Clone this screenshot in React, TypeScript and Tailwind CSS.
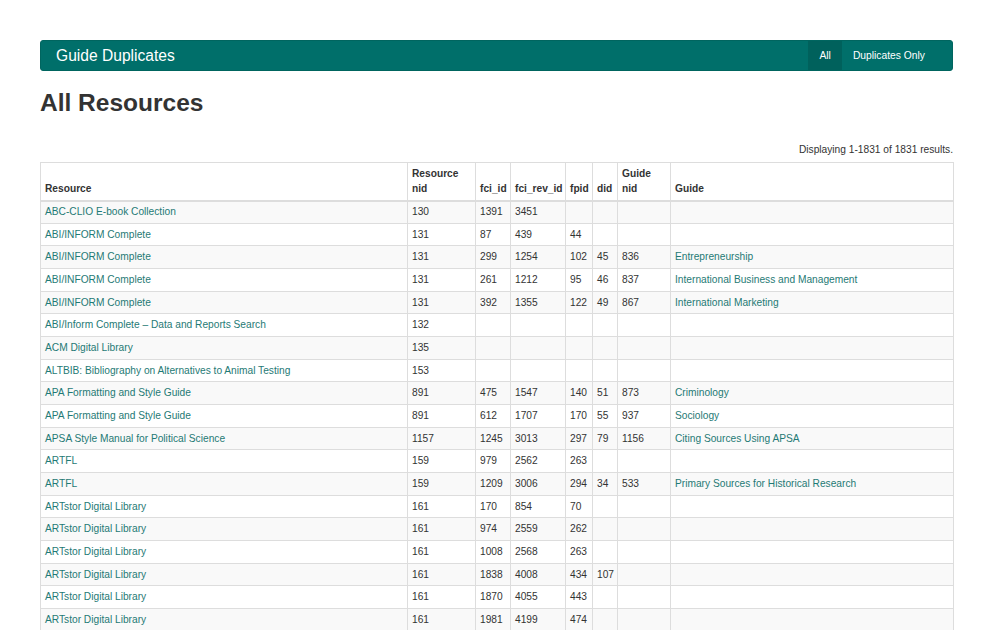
import React from "react";

type Row = {
  r: string;
  nid: string;
  fci?: string;
  rev?: string;
  fpid?: string;
  did?: string;
  gnid?: string;
  guide?: string;
};

const rows: Row[] = [
  { r: "ABC-CLIO E-book Collection", nid: "130", fci: "1391", rev: "3451" },
  { r: "ABI/INFORM Complete", nid: "131", fci: "87", rev: "439", fpid: "44" },
  { r: "ABI/INFORM Complete", nid: "131", fci: "299", rev: "1254", fpid: "102", did: "45", gnid: "836", guide: "Entrepreneurship" },
  { r: "ABI/INFORM Complete", nid: "131", fci: "261", rev: "1212", fpid: "95", did: "46", gnid: "837", guide: "International Business and Management" },
  { r: "ABI/INFORM Complete", nid: "131", fci: "392", rev: "1355", fpid: "122", did: "49", gnid: "867", guide: "International Marketing" },
  { r: "ABI/Inform Complete \u2013 Data and Reports Search", nid: "132" },
  { r: "ACM Digital Library", nid: "135" },
  { r: "ALTBIB: Bibliography on Alternatives to Animal Testing", nid: "153" },
  { r: "APA Formatting and Style Guide", nid: "891", fci: "475", rev: "1547", fpid: "140", did: "51", gnid: "873", guide: "Criminology" },
  { r: "APA Formatting and Style Guide", nid: "891", fci: "612", rev: "1707", fpid: "170", did: "55", gnid: "937", guide: "Sociology" },
  { r: "APSA Style Manual for Political Science", nid: "1157", fci: "1245", rev: "3013", fpid: "297", did: "79", gnid: "1156", guide: "Citing Sources Using APSA" },
  { r: "ARTFL", nid: "159", fci: "979", rev: "2562", fpid: "263" },
  { r: "ARTFL", nid: "159", fci: "1209", rev: "3006", fpid: "294", did: "34", gnid: "533", guide: "Primary Sources for Historical Research" },
  { r: "ARTstor Digital Library", nid: "161", fci: "170", rev: "854", fpid: "70" },
  { r: "ARTstor Digital Library", nid: "161", fci: "974", rev: "2559", fpid: "262" },
  { r: "ARTstor Digital Library", nid: "161", fci: "1008", rev: "2568", fpid: "263" },
  { r: "ARTstor Digital Library", nid: "161", fci: "1838", rev: "4008", fpid: "434", did: "107" },
  { r: "ARTstor Digital Library", nid: "161", fci: "1870", rev: "4055", fpid: "443" },
  { r: "ARTstor Digital Library", nid: "161", fci: "1981", rev: "4199", fpid: "474" },
  { r: "ARTstor Digital Library", nid: "161", fci: "2011", rev: "4240", fpid: "480" },
  { r: "ASTM Standards", nid: "165", fci: "2140", rev: "4410", fpid: "501" },
];

const td = "border border-[#dddddd] px-[4px] h-[22.67px] align-middle whitespace-nowrap overflow-hidden";
const th = "border border-[#dddddd] border-b-2 px-[4px] pb-[4px] align-bottom text-left font-bold leading-[15px]";

export default function App() {
  return (
    <div className="w-[1000px] min-h-[630px] bg-white text-[#333333] font-['Liberation_Sans',Arial,sans-serif] pt-[40px] pl-[40px]">
      <div className="w-[913px]">
        <nav className="h-[31px] bg-[#006f6a] rounded-[3px] border border-[#00655f] flex items-stretch justify-between text-white">
          <div className="pl-[15px] flex items-center text-[15.6px] leading-none">Guide Duplicates</div>
          <div className="flex items-stretch pr-[16px] text-[10.3px]">
            <div className="bg-[#00615c] px-[11px] flex items-center">All</div>
            <div className="px-[11px] flex items-center">Duplicates Only</div>
          </div>
        </nav>
        <h1 className="mt-[18px] text-[24.5px] leading-[28px] font-bold text-[#333333]">All Resources</h1>
        <div className="mt-[26px] text-right text-[10.2px] leading-[14px]">Displaying 1-1831 of 1831 results.</div>
        <table className="mt-[5px] w-[913px] table-fixed border-collapse text-[10.2px]">
          <colgroup>
            <col className="w-[367px]" />
            <col className="w-[68px]" />
            <col className="w-[35px]" />
            <col className="w-[55px]" />
            <col className="w-[27px]" />
            <col className="w-[25px]" />
            <col className="w-[53px]" />
            <col className="w-[283px]" />
          </colgroup>
          <thead>
            <tr className="h-[38px]">
              <th className={th}>Resource</th>
              <th className={th}>Resource<br />nid</th>
              <th className={th}>fci_id</th>
              <th className={th}>fci_rev_id</th>
              <th className={th}>fpid</th>
              <th className={th}>did</th>
              <th className={th}>Guide<br />nid</th>
              <th className={th}>Guide</th>
            </tr>
          </thead>
          <tbody>
            {rows.map((row, i) => (
              <tr key={i} className={i % 2 === 0 ? "bg-[#f9f9f9]" : "bg-white"}>
                <td className={td}><span className="text-[#1f7a75]">{row.r}</span></td>
                <td className={td}>{row.nid}</td>
                <td className={td}>{row.fci ?? ""}</td>
                <td className={td}>{row.rev ?? ""}</td>
                <td className={td}>{row.fpid ?? ""}</td>
                <td className={td}>{row.did ?? ""}</td>
                <td className={td}>{row.gnid ?? ""}</td>
                <td className={td}><span className="text-[#1f7a75]">{row.guide ?? ""}</span></td>
              </tr>
            ))}
          </tbody>
        </table>
      </div>
    </div>
  );
}
